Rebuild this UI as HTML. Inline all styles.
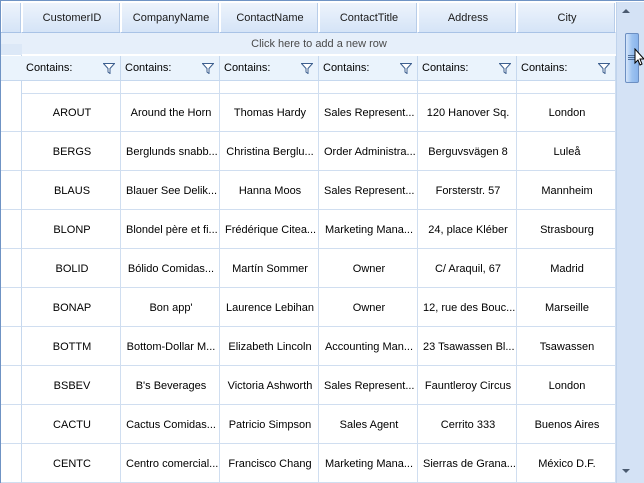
<!DOCTYPE html>
<html><head><style>
*{margin:0;padding:0;box-sizing:border-box}
body{width:644px;height:483px;overflow:hidden;background:#fff;font-family:"Liberation Sans",sans-serif;font-size:11px;color:#000;position:relative}
.frame{position:absolute;left:0;top:0;width:644px;height:483px;border:1px solid #6f93c4;border-right:none}
.abs{position:absolute}
.hdr{top:2px;height:31px;background:linear-gradient(#eef4fc,#d5e4f7);border-right:1px solid #fff;border-bottom:1px solid #a9c3e6;text-align:center;line-height:32px;color:#1a1a1a;box-shadow:inset 1px 1px 0 #fff,inset -1px 0 0 #b8cde9;padding-left:2px}
.newrow{left:22px;top:33px;width:594px;height:22px;background:#e6effa;text-align:center;line-height:23px;color:#4a4a4a;border-bottom:1px solid #fff}
.flt{top:56px;height:25px;background:#eaf3fc;border-right:1px solid #c6d8ee;border-bottom:1px solid #c6d8ee;line-height:25px;padding-left:4px}
.flt svg{position:absolute;right:5px;top:7px}
.cell{height:39px;border-right:1px solid #d0def0;border-bottom:1px solid #d0def0;text-align:center;line-height:40px;white-space:nowrap;overflow:hidden;padding:0 3px 0 5px}
</style></head><body>
<div class="frame"></div>
<div class="abs" style="left:1px;top:2px;width:21px;height:481px;background:#fff;border-right:1px solid #c6d8ee"></div>
<div class="abs hdr" style="left:1px;width:21px"></div>
<div class="abs" style="left:1px;top:33px;width:21px;height:22px;background:#e6effa"></div>
<div class="abs" style="left:1px;top:44px;width:21px;height:11px;background:#dce8f7"></div>
<div class="abs" style="left:1px;top:56px;width:21px;height:25px;background:#eaf3fc;border-bottom:1px solid #c6d8ee"></div>
<div class="abs hdr" style="left:22px;width:99px">CustomerID</div>
<div class="abs hdr" style="left:121px;width:99px">CompanyName</div>
<div class="abs hdr" style="left:220px;width:99px">ContactName</div>
<div class="abs hdr" style="left:319px;width:99px">ContactTitle</div>
<div class="abs hdr" style="left:418px;width:99px">Address</div>
<div class="abs hdr" style="left:517px;width:99px">City</div>
<div class="abs newrow">Click here to add a new row</div>
<div id="f"></div>
<div id="g"></div>
<div class="abs" style="left:616px;top:2px;width:28px;height:481px;background:#d4e2f5;border-left:1px solid #c0d3ec"></div>
<div class="abs" style="left:622px;top:9px;width:0;height:0;border-left:4px solid transparent;border-right:4px solid transparent;border-bottom:4px solid #4a5a70"></div>
<div class="abs" style="left:622px;top:469px;width:0;height:0;border-left:4px solid transparent;border-right:4px solid transparent;border-top:4px solid #4a5a70"></div>
<div class="abs" style="left:625px;top:33px;width:14px;height:50px;background:linear-gradient(90deg,#d6e6fb,#9cc2f0 50%,#8ab5ec);border:1px solid #6c8fc2;border-radius:2px"></div>
<div class="abs" style="left:628px;top:55px;width:8px;height:1px;background:#4f6e99;box-shadow:0 2px 0 #4f6e99,0 4px 0 #4f6e99"></div>
<svg class="abs" style="left:634px;top:48px" width="10" height="20"><path d="M1 1 L1 15 L4 12 L6 17 L8 16 L6 11 L10 11 Z" fill="#fff" stroke="#000" stroke-width="1"/></svg>
<script>
var xs=[22,121,220,319,418,517],f='';
xs.forEach(function(x){f+='<div class="abs flt" style="left:'+x+'px;width:99px">Contains:<svg width="12" height="11"><path d="M0.5 0.5 H11.5 L7 5.5 V10.5 L5 9 V5.5 Z" fill="#fff" stroke="#3d5f8f"/></svg></div>';});
document.getElementById('f').innerHTML=f;
var rows=[["AROUT","Around the Horn","Thomas Hardy","Sales Represent...","120 Hanover Sq.","London"],
["BERGS","Berglunds snabb...","Christina Berglu...","Order Administra...","Berguvsvägen  8","Luleå"],
["BLAUS","Blauer See Delik...","Hanna Moos","Sales Represent...","Forsterstr. 57","Mannheim"],
["BLONP","Blondel père et fi...","Frédérique Citea...","Marketing Mana...","24, place Kléber","Strasbourg"],
["BOLID","Bólido Comidas...","Martín Sommer","Owner","C/ Araquil, 67","Madrid"],
["BONAP","Bon app'","Laurence Lebihan","Owner","12, rue des Bouc...","Marseille"],
["BOTTM","Bottom-Dollar M...","Elizabeth Lincoln","Accounting Man...","23 Tsawassen Bl...","Tsawassen"],
["BSBEV","B's Beverages","Victoria Ashworth","Sales Represent...","Fauntleroy Circus","London"],
["CACTU","Cactus Comidas...","Patricio Simpson","Sales Agent","Cerrito 333","Buenos Aires"],
["CENTC","Centro comercial...","Francisco Chang","Marketing Mana...","Sierras de Grana...","México D.F."]];
var g='';
xs.forEach(function(x){g+='<div class="abs" style="left:'+x+'px;top:81px;width:99px;height:13px;border-right:1px solid #d0def0;border-bottom:1px solid #d0def0"></div>';});
rows.forEach(function(r,i){var y=93+i*39;
g+='<div class="abs" style="left:1px;top:'+y+'px;width:21px;height:39px;border-bottom:1px solid #d0def0;border-right:1px solid #c6d8ee"></div>';
r.forEach(function(t,j){g+='<div class="abs cell" style="left:'+xs[j]+'px;top:'+y+'px;width:99px">'+t+'</div>';});});
document.getElementById('g').innerHTML=g;
</script>
</body></html>
